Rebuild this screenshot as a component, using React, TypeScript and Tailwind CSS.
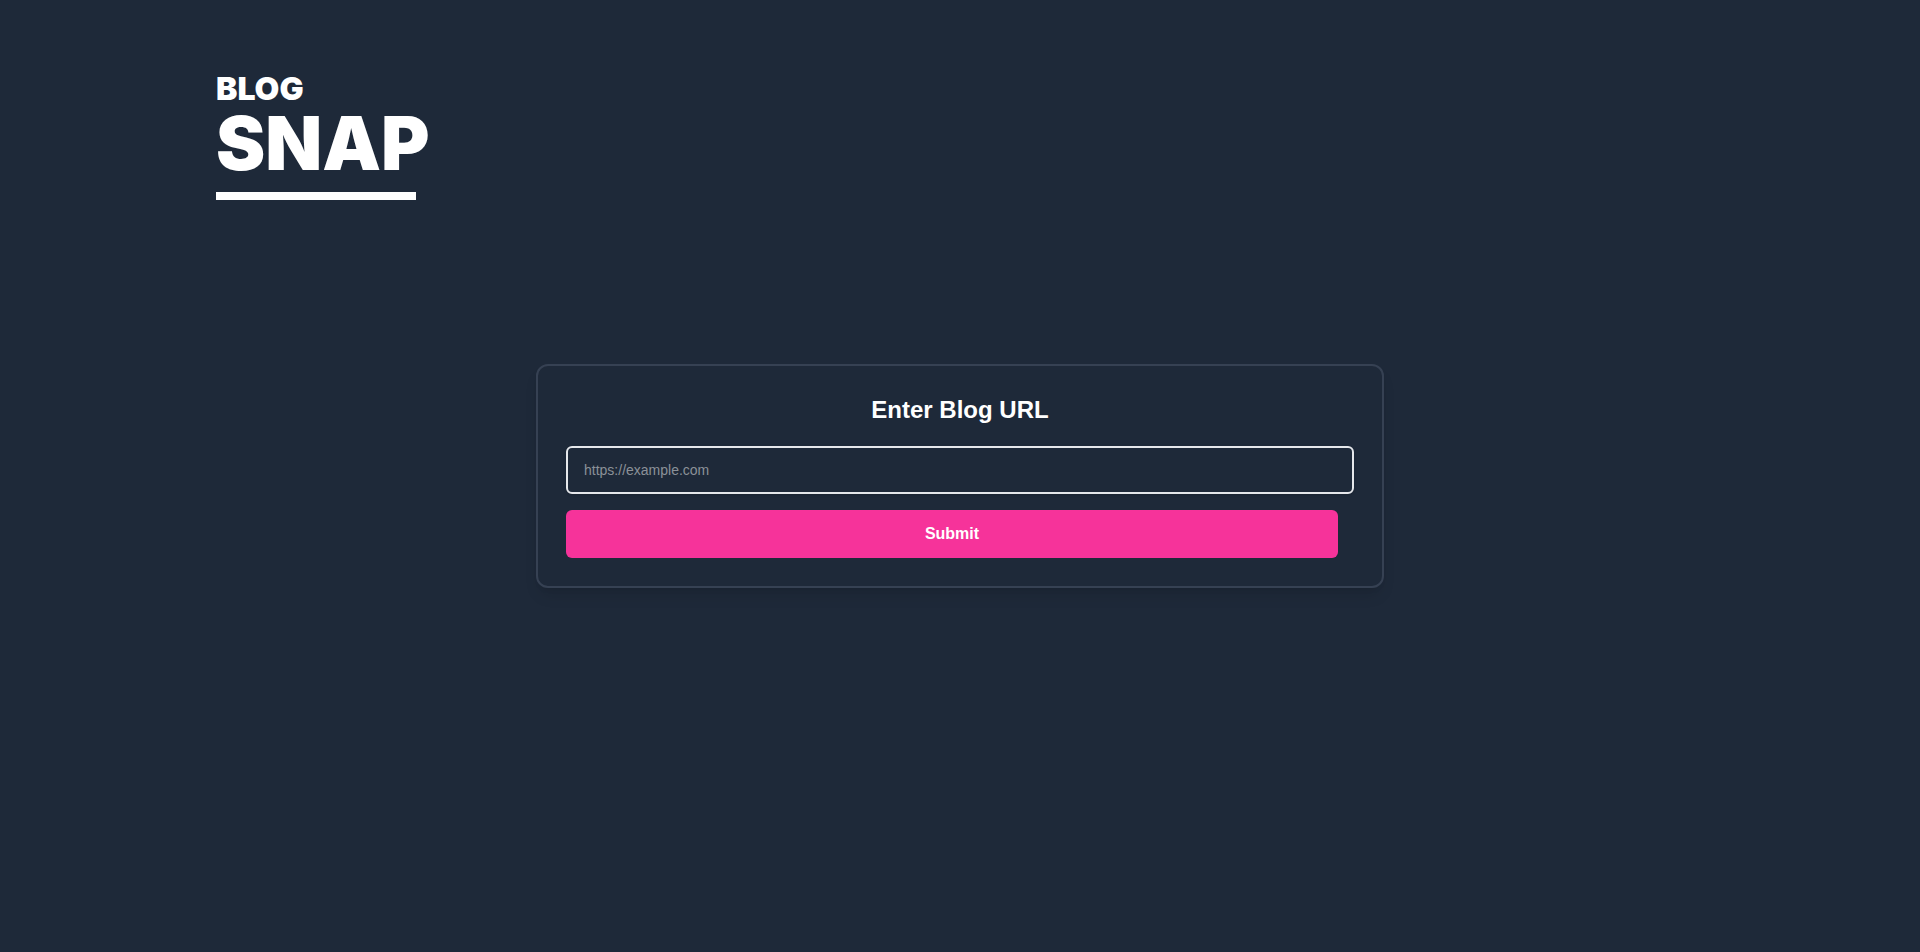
import { useState } from "react";

function Logo() {
  return (
    <h1 className="flex flex-col items-start font-['Arial_Black','Inter',sans-serif] font-black text-white">
      <span className="text-[32px] leading-[34px]">BLOG</span>
      <span className="text-[74px] leading-[74px]">SNAP</span>
      <span className="mt-3 h-2 w-[200px] bg-white" />
    </h1>
  );
}

function UrlForm() {
  const [url, setUrl] = useState("");

  return (
    <form
      onSubmit={(event) => event.preventDefault()}
      className="w-full max-w-[848px] rounded-xl border-2 border-gray-700 p-7 shadow-lg"
    >
      <label
        htmlFor="blog-url"
        className="mb-5 block text-center text-2xl font-bold text-white"
      >
        Enter Blog URL
      </label>
      <input
        id="blog-url"
        type="url"
        value={url}
        onChange={(event) => setUrl(event.target.value)}
        placeholder="https://example.com"
        className="mb-4 block h-12 w-full rounded-md border-2 border-gray-200 bg-transparent px-4 text-sm text-white shadow-sm outline-none placeholder:text-[#8b9198]"
      />
      <div className="pr-4">
        <button
          type="submit"
          className="block h-12 w-full rounded-md bg-pink-500 text-base font-bold text-white"
        >
          Submit
        </button>
      </div>
    </form>
  );
}

export default function App() {
  return (
    <div className="min-h-screen bg-gray-800 font-['Liberation_Sans',Arial,sans-serif]">
      <header className="mx-auto max-w-[1536px] px-6 pt-[72px]">
        <Logo />
      </header>
      <main className="flex justify-center px-6 pt-[164px] pb-16">
        <UrlForm />
      </main>
    </div>
  );
}
